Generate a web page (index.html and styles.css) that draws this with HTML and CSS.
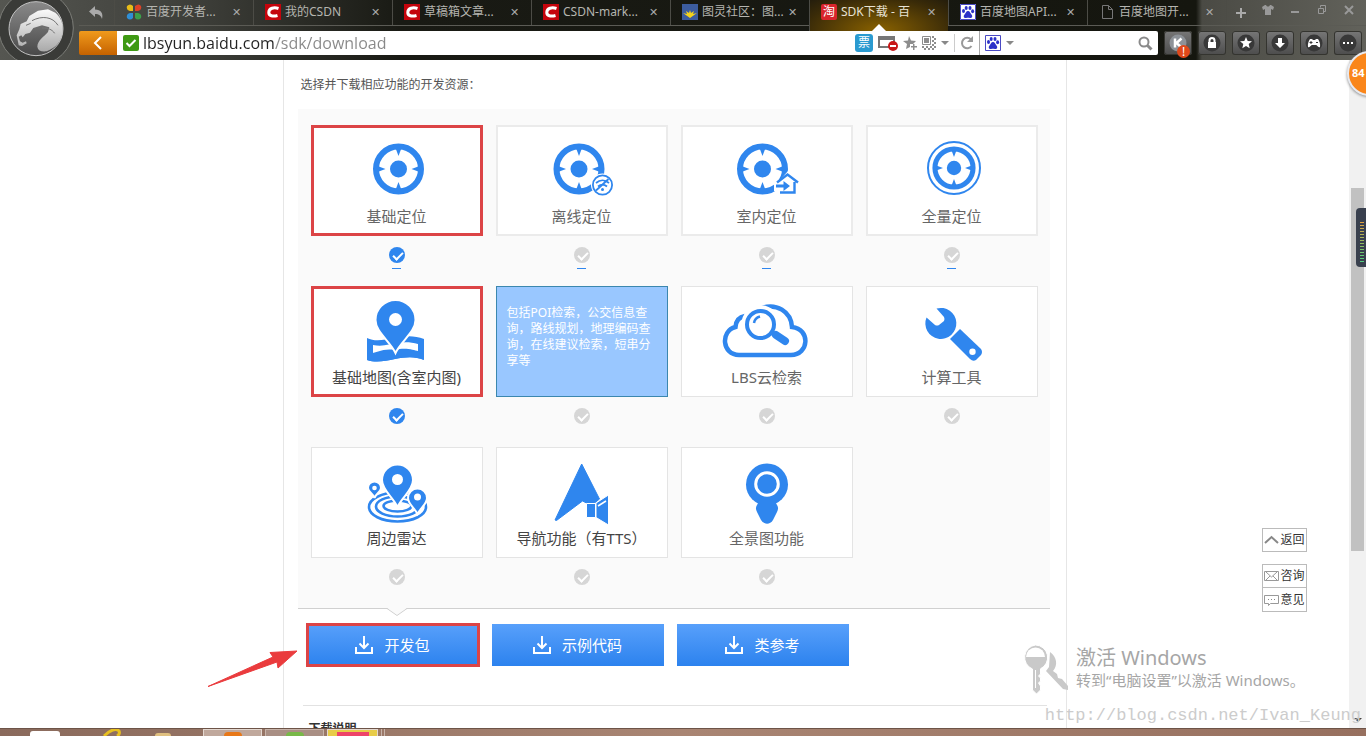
FILE: index.html
```html
<!DOCTYPE html>
<html lang="zh-CN">
<head>
<meta charset="utf-8">
<title>SDK下载 - 百度</title>
<link rel="stylesheet" href="styles.css">
</head>
<body>
<svg width="0" height="0" class="defs" aria-hidden="true">
  <defs>
    <linearGradient id="silver" x1="0" y1="0" x2="0" y2="1"><stop offset="0" stop-color="#fafafa"/><stop offset="1" stop-color="#a9a9a9"/></linearGradient>
    <linearGradient id="disc" x1="0" y1="0" x2="0" y2="1"><stop offset="0" stop-color="#8a8a8a"/><stop offset="0.5" stop-color="#6a6a6a"/><stop offset="1" stop-color="#484848"/></linearGradient>
    <symbol id="target" viewBox="-26 -26 52 52">
      <circle r="22.5" fill="#fff" stroke="#2f86ee" stroke-width="6"/>
      <circle r="8.5" fill="#2f86ee"/>
      <path fill="#2f86ee" d="M-3-21h6L0-13zM-3 21h6L0 13zM-21-3v6l8-3zM21-3v6l-8-3z"/>
    </symbol>
    <symbol id="paw" viewBox="0 0 16 16">
      <path fill="#fff" d="M0 0h16v16H0z"/>
      <path fill="none" stroke="#4a4ac4" d="M.5.5h15v15H.5z"/>
      <g fill="#2c32c8"><ellipse cx="3.500" cy="7" rx="1.500" ry="2"/><ellipse cx="6.200" cy="4" rx="1.500" ry="2.100"/><ellipse cx="10" cy="4" rx="1.500" ry="2.100"/><ellipse cx="12.600" cy="7.300" rx="1.500" ry="2"/><path d="M8 7c2 0 2 2 3.500 3.400 1.600 1.800.3 4-1.600 3.600-1.500-.3-2.300-.3-3.800 0-2 .4-3.200-1.800-1.600-3.600C6 9 6 7 8 7z"/></g>
    </symbol>
    <symbol id="csdn" viewBox="0 0 16 16">
      <path fill="#c4040c" d="M0 0h16v16H0z"/>
      <path fill="none" stroke="#fff" stroke-width="3" d="M13.500 4.500C9 3 4 4 3.800 8.300 3.600 12 8 12.800 12.500 11.500"/>
    </symbol>
    <symbol id="download" viewBox="0 0 18 18">
      <path fill="none" stroke="#fff" stroke-width="2" d="M9 0v12M4.500 7.500 9 12l4.500-4.500M1 11v6h16v-6"/>
    </symbol>
  </defs>
</svg>

<header class="browser">
  <svg class="logo" viewBox="0 0 237 180" aria-hidden="true">
    <circle cx="108" cy="84" r="112" fill="#3a3b38" stroke="#7c7d78" stroke-width="3"/>
    <circle cx="108" cy="86" r="81" fill="url(#disc)" stroke="#c2c2c2" stroke-width="3"/>
    <path fill="url(#silver)" d="M50 106l8-18 4-16 18-8 8-16 26-16 30-4 22 10c16 14 24 32 22 56-2 28-20 50-48 60-16 2-26-2-28-14 0-18 20-30 32-44l4-14-22-6-26 8-10 14-14 4-8 10-4-6-8 4 4 14 8 4 10-4 2 6-14 8-10-2z"/>
    <path fill="none" stroke="#747474" stroke-width="3" d="M96 62c30-16 62-12 78 14M126 84c18 0 30 4 38 16M78 76l14-6"/>
  </svg>
  <div class="chrome">
    <div class="tabrow">
      <button class="undo" aria-label="后退"><svg width="16" height="14" viewBox="0 0 16 14"><path fill="#aaa" d="M7 0v3.500c6 0 8.500 4 7 9.500-1-3.500-3-5-7-5V11L1 5.500z"/></svg></button>
      <nav class="tabs">
        <div class="tab"><svg class="fav" viewBox="0 0 16 16"><path fill="#e8bc18" d="M1 2q3-3 6 0v5H4Q0 6 1 2z"/><path fill="#dd4227" d="M9 2q4-3 6 0 1 4-3 5H9z"/><path fill="#2f8fd6" d="M1 14q-1-4 3-5h3v5q-3 3-6 0z"/><path fill="#3ba04a" d="M9 9h3q4 1 3 5-3 3-6 0z"/></svg><a href="#">百度开发者...</a><button aria-label="关闭">✕</button></div>
        <div class="tab"><svg class="fav"><use href="#csdn"/></svg><a href="#">我的CSDN</a><button aria-label="关闭">✕</button></div>
        <div class="tab"><svg class="fav"><use href="#csdn"/></svg><a href="#">草稿箱文章...</a><button aria-label="关闭">✕</button></div>
        <div class="tab"><svg class="fav"><use href="#csdn"/></svg><a href="#">CSDN-mark...</a><button aria-label="关闭">✕</button></div>
        <div class="tab"><svg class="fav" viewBox="0 0 16 16"><path fill="#3c5c9e" d="M0 0h16v16H0z"/><path fill="#f2d21c" d="M8 14 1 9l4 1-1-3 3 2 1-3 1 3 3-2-1 3 4-1z"/></svg><a href="#">图灵社区：图...</a><button aria-label="关闭">✕</button></div>
        <div class="tab active"><span class="fav tao">淘</span><a href="#">SDK下载 - 百</a><button aria-label="关闭">✕</button></div>
        <div class="tab"><svg class="fav"><use href="#paw"/></svg><a href="#">百度地图API...</a><button aria-label="关闭">✕</button></div>
        <div class="tab"><svg class="fav" viewBox="0 0 16 16"><path fill="none" stroke="#777" d="M3.500 1.500h6l4 4v9h-10zM9.500 1.500v4h4"/></svg><a href="#">百度地图开...</a><button aria-label="关闭">✕</button></div>
      </nav>
      <div class="window">
        <button aria-label="新标签"><svg width="12" height="18" viewBox="0 0 12 18"><path stroke="#aaa" stroke-width="2" d="M6 7v10M1 12h10"/></svg></button>
        <button aria-label="皮肤"><svg width="12" height="10" viewBox="0 0 12 10"><path fill="#999" d="M0 2 3 0h1c1 2 3 2 4 0h1l3 2-1 3-2-1v6H3V4L1 5z"/></svg></button>
        <button aria-label="最小化"><svg width="10" height="10" viewBox="0 0 10 10"><path fill="#999" d="M1 6h8v2H1z"/></svg></button>
        <button aria-label="还原"><svg width="10" height="10" viewBox="0 0 10 10"><path fill="none" stroke="#999" d="M3.500 2.500v-2h5v6h-2M1.500 3.500h5v5h-5z"/></svg></button>
        <button aria-label="关闭窗口"><svg width="10" height="10" viewBox="0 0 10 10"><path stroke="#999" stroke-width="2" d="m1 1 8 8M9 1 1 9"/></svg></button>
      </div>
    </div>
    <div class="toolbar">
      <button class="back" aria-label="返回"><svg width="10" height="14" viewBox="0 0 10 14"><path fill="none" stroke="#fff" stroke-width="2" d="M8 1 2 7l6 6"/></svg></button>
      <div class="address">
        <svg width="16" height="16" viewBox="0 0 16 16"><rect width="16" height="16" rx="2" fill="#3f9a14"/><path fill="none" stroke="#fff" stroke-width="2" d="m3.500 8 3 3 6-6"/></svg>
        <input class="url" type="text" aria-label="地址" value="lbsyun.baidu.com/sdk/download">
        <div class="tools">
          <span class="ticket">票</span>
          <svg width="20" height="16" viewBox="0 0 20 16"><path fill="none" stroke="#777" stroke-width="2" d="M1 2h15v10H1z"/><path fill="#777" d="M0 1h17v4H0z"/><circle cx="15" cy="11" r="5" fill="#c81818"/><path fill="#fff" d="M12 10h6v2h-6z"/></svg>
          <svg width="14" height="14" viewBox="0 0 14 14"><path fill="#8d8d8d" d="m6 0 2 4.500 5 .5-3 3H7v3l-4 2 1-5-4-3 5-.5zM10 8h1.500v2H14v1.500h-2.500V14H10v-2.500H8V10h2z"/></svg>
          <svg width="14" height="14" viewBox="0 0 14 14"><path fill="none" stroke="#8d8d8d" d="M.5.5h8v8h-8z"/><path fill="#8d8d8d" d="M2 2h5v5H2zM10 0h2v2h-2zM12 2h2v2h-2zM10 4h2v2h-2zM12 6h2v2h-2zM10 8h2v2h-2zM0 10h2v2H0zM2 12h2v2H2zM4 10h2v2H4zM6 12h2v2H6zM8 10h2v2H8zM12 10h2v2h-2zM10 12h2v2h-2z"/></svg>
          <i class="caret"></i><i class="rule"></i>
          <svg width="14" height="14" viewBox="0 0 14 14"><path fill="none" stroke="#999" stroke-width="2" d="M11.500 10A5.200 5.200 0 1 1 11 3.500"/><path fill="#999" d="M13 0v6H7z"/></svg>
          <i class="rule tall"></i>
          <svg width="16" height="16"><use href="#paw"/></svg>
          <i class="caret"></i>
        </div>
        <button class="search" aria-label="搜索"><svg width="15" height="15" viewBox="0 0 15 15"><circle cx="6" cy="6" r="4.500" fill="none" stroke="#8a8a8a" stroke-width="2"/><path stroke="#8a8a8a" stroke-width="3" d="m9.500 9.500 4 4"/></svg></button>
      </div>
      <div class="plugins">
        <button aria-label="K"><svg viewBox="0 0 18 18"><circle cx="9" cy="9" r="8.500" fill="#8d9298"/><path fill="none" stroke="#fff" stroke-width="2.500" d="M6 4.500v9M12.500 4.500 7.500 9l5 4.500"/></svg><span class="alert">!</span></button>
        <button aria-label="密码"><svg viewBox="0 0 18 18"><circle cx="9" cy="9" r="8.500" fill="#383838"/><path fill="#fff" d="M5 8h8v6H5z"/><path fill="none" stroke="#fff" stroke-width="2" d="M6.500 9V6.500a2.500 2.500 0 0 1 5 0V9"/></svg></button>
        <button aria-label="收藏"><svg viewBox="0 0 18 18"><circle cx="9" cy="9" r="8.500" fill="#383838"/><path fill="#fff" d="m9 3 1.700 4 4.300.3-3.300 2.700 1 4.200L9 12l-3.700 2.200 1-4.200L3 7.300 7.300 7z"/></svg></button>
        <button aria-label="下载"><svg viewBox="0 0 18 18"><circle cx="9" cy="9" r="8.500" fill="#383838"/><path fill="#fff" d="M7 4h4v5h3l-5 5-5-5h3z"/></svg></button>
        <button aria-label="游戏"><svg viewBox="0 0 18 18"><circle cx="9" cy="9" r="8.500" fill="#383838"/><path fill="#fff" d="M5 5h2l1 1h2l1-1h2c1.500 2 2.500 5 2 8-2 1-3-2-4-2H7c-1 0-2 3-4 2-.5-3 .5-6 2-8z"/><path stroke="#383838" d="M4.500 8.500h3M6 7v3M11 8.500h2"/></svg></button>
        <button aria-label="更多"><svg viewBox="0 0 18 18"><circle cx="9" cy="9" r="8.500" fill="#383838"/><path fill="#fff" d="M4 8h2v2H4zM8 8h2v2H8zM12 8h2v2h-2z"/></svg></button>
      </div>
    </div>
  </div>
</header>

<div class="viewport">
  <main class="column">
    <p class="intro">选择并下载相应功能的开发资源：</p>
    <section class="panel">
      <div class="cell first">
        <label class="card picked" for="f1"><svg viewBox="0 0 100 80"><use href="#target" x="25.500" y="18" width="52" height="52"/></svg><span>基础定位</span></label>
        <input type="checkbox" id="f1" checked>
      </div>
      <div class="cell first">
        <label class="card" for="f2"><svg viewBox="0 0 100 80"><use href="#target" x="21" y="18" width="52" height="52"/><circle cx="70.500" cy="60" r="11.500" fill="#fff"/><g fill="none" stroke="#2f86ee" stroke-width="1.800"><circle cx="70.500" cy="60" r="9.600"/><path d="M64 58c4-3.500 9-3.500 13 0M66 61.500c3-2.500 6-2.500 9 0M64 65.500 76.500 54"/></g><circle cx="70.500" cy="64.500" r="1.500" fill="#2f86ee"/></svg><span>离线定位</span></label>
        <input type="checkbox" id="f2">
      </div>
      <div class="cell first">
        <label class="card" for="f3"><svg viewBox="0 0 100 80"><use href="#target" x="19.500" y="18" width="52" height="52"/><path fill="#fff" d="M57 56h5l9-10 13 12v13H60v-5h-3z"/><path fill="none" stroke="#2f86ee" stroke-width="2.400" d="m60 57.500 10.500-8 10.500 8M63 67.500h14.500V57"/><path fill="#2f86ee" d="M59 59.500h7.500V56l6.500 5-6.500 5v-3.500H59z"/></svg><span>室内定位</span></label>
        <input type="checkbox" id="f3">
      </div>
      <div class="cell first">
        <label class="card" for="f4"><svg viewBox="0 0 100 80"><circle cx="52" cy="43" r="26" fill="none" stroke="#2f86ee" stroke-width="2"/><use href="#target" x="30" y="21" width="44" height="44"/></svg><span>全量定位</span></label>
        <input type="checkbox" id="f4">
      </div>

      <div class="cell">
        <label class="card picked" for="f5"><svg viewBox="0 0 100 80"><path fill="#2f86ee" d="M20 52c8 4 17 2 27 0 10-2 20-3 30 1v21c-9-4-19-3-29-1-10 2-19 4-28 1z"/><path fill="#fff" d="M26 59c10 2 17-1 24-2s14-1 21 1v8c-7-2-14-2-21-1-9 1-15 3-24 2z"/><path fill="#2f86ee" d="M20 68c10-1 16-6 28-4 10-3 19 0 23 1l6 9c-9-4-19-3-29-1-10 2-19 4-28 1z"/><path fill="#2f86ee" stroke="#fff" stroke-width="2" d="M48.500 67C43 55 28.500 46 28.500 34a20 20 0 0 1 40 0c0 12-14.500 21-20 33z"/><circle cx="48.500" cy="33.500" r="6.500" fill="#fff"/></svg><span class="dark">基础地图(含室内图)</span></label>
        <input type="checkbox" id="f5" checked>
      </div>
      <div class="cell">
        <label class="card info" for="f6">包括POI检索，公交信息查询，路线规划，地理编码查询，在线建议检索，短串分享等</label>
        <input type="checkbox" id="f6">
      </div>
      <div class="cell">
        <label class="card" for="f7"><svg viewBox="0 0 100 80"><g fill="none" stroke="#2f86ee" stroke-width="4.500"><path d="M28 30c-6 1-9 5-9.500 11C3 45 5 69 22 69h52c18 0 20-26 1-28-1-16-16-24-30-19"/><circle cx="43.500" cy="38.500" r="17" fill="#fff" stroke="#fff"/><circle cx="43.500" cy="38.500" r="13.500" fill="#fff" stroke-width="4"/></g><path fill="none" stroke="#2f86ee" stroke-width="2.500" d="M37 37c.5-3.500 2.500-5.500 6-6.500"/><path stroke="#2f86ee" stroke-width="8" stroke-linecap="round" d="m59 49 9 6"/><path stroke="#2f86ee" stroke-width="5" d="m54 46 6 4"/></svg><span>LBS云检索</span></label>
        <input type="checkbox" id="f7">
      </div>
      <div class="cell">
        <label class="card" for="f8"><svg viewBox="0 0 100 80"><path fill="#2f86ee" d="M34.500 22.500a15.500 15.500 0 1 1-10 9L33 39q2 1 4 0l5-4q1-2 0-4z"/><path fill="#2f86ee" d="M58 43 79 63q2 3 0 6l-5 5q-3 2-6-1L48 53z"/><circle cx="70.500" cy="65.700" r="3.200" fill="#fff"/></svg><span>计算工具</span></label>
        <input type="checkbox" id="f8">
      </div>

      <div class="cell">
        <label class="card" for="f9"><svg viewBox="0 0 100 80"><g fill="none" stroke="#2f86ee" stroke-width="2.600"><ellipse cx="50.500" cy="60" rx="28.500" ry="14.500"/><ellipse cx="50.500" cy="59.500" rx="21.500" ry="10"/><ellipse cx="50.500" cy="59" rx="14" ry="5.500"/></g><g fill="#2f86ee" stroke="#fff" stroke-width="2"><path d="M50.500 60C46 50 35 43 35 33a15.500 15.500 0 0 1 31 0c0 10-11 17-15.500 27z"/><path d="M70.500 67c-3-6-9.500-10-9.500-16a9.500 9.500 0 0 1 19 0c0 6-6.500 10-9.500 16z"/><path d="M27.500 51c-1-4-6.500-6-6.500-10a6.500 6.500 0 0 1 13 0c0 4-5.500 6-6.500 10z"/></g><g fill="#fff"><circle cx="50.500" cy="32.500" r="5.500"/><circle cx="70.500" cy="50" r="3.500"/><circle cx="27.500" cy="41" r="2.300"/></g></svg><span class="dark">周边雷达</span></label>
        <input type="checkbox" id="f9">
      </div>
      <div class="cell">
        <label class="card" for="f10"><svg viewBox="0 0 100 80"><path fill="#2f86ee" stroke="#2f86ee" stroke-linejoin="round" d="M49.700 17 23 73l1.500.5L50.500 54l4 2h8l5-4z"/><path fill="#2f86ee" stroke="#fff" d="M54.500 56.500h9v14h-9zM64 56l12.500-8v30L64 70.500z"/><path stroke="#fff" stroke-width="1.500" d="m66 59 8-5"/></svg><span class="dark">导航功能（有TTS）</span></label>
        <input type="checkbox" id="f10">
      </div>
      <div class="cell">
        <label class="card" for="f11"><svg viewBox="0 0 100 80"><circle cx="50" cy="37.500" r="21" fill="#2f86ee"/><circle cx="50" cy="37" r="11.300" fill="none" stroke="#fff" stroke-width="3"/><path fill="#2f86ee" d="M42 55h16c3 4 4 6 2 10l-4 8c-3 5-9 5-12 0l-4-8c-2-4-1-6 2-10z"/></svg><span>全景图功能</span></label>
        <input type="checkbox" id="f11">
      </div>
      <svg class="notch" width="22" height="8" viewBox="0 0 22 8"><path fill="#fafafa" d="M1 0h20L11 7z"/><path fill="none" stroke="#d0d0d0" d="m1 .5 10 7 10-7"/></svg>
    </section>
    <div class="downloads">
      <button class="picked"><svg width="18" height="18"><use href="#download"/></svg>开发包</button>
      <button><svg width="18" height="18"><use href="#download"/></svg>示例代码</button>
      <button><svg width="18" height="18"><use href="#download"/></svg>类参考</button>
    </div>
    <h2 class="notes">下载说明</h2>
    <svg class="pointer" width="92" height="38" viewBox="0 0 92 38"><path fill="#ea3b3d" stroke="#ea3b3d" stroke-linejoin="round" d="M1 36.500 66 7l-3-4.500L90 1 71 18l-1-6z"/></svg>
  </main>
  <div class="scrollbar"><div class="thumb"></div><i class="down"></i></div>

  <aside class="side">
    <a href="#" class="top"><svg width="15" height="16" viewBox="0 0 15 16"><path fill="none" stroke="#888" stroke-width="2" d="m1 11 6.500-6 6.500 6"/></svg>返回</a>
    <a href="#"><svg width="15" height="16" viewBox="0 0 15 16"><path fill="none" stroke="#999" d="M.5 3.500h14v9H.5zM2 4l5.500 5L13 4M2 12l4-4M13 12 9 8"/></svg>咨询</a>
    <a href="#"><svg width="15" height="16" viewBox="0 0 15 16"><path fill="none" stroke="#999" d="M.5 3.500h14v8h-8l-2 2v-2h-4z"/><path fill="#888" d="M4 7h1v1H4zM7 7h1v1H7zM10 7h1v1h-1z"/></svg>意见</a>
  </aside>
  <div class="activate">
    <svg width="46" height="50" viewBox="0 0 46 50"><path fill="#c9c9c9" d="M27 7c7 5 8 13 3 19l4 3 1 4 4 1 6 7v4l-5-1-17-18 3-4z"/><path fill="#c9c9c9" stroke="#fff" d="M12.500 0a12.500 12.500 0 0 1 5 23.800V29l-2 2 2 2v3l-2 2 2 3v4l-4 4-4-4V24A12.500 12.500 0 0 1 12.500 0z"/><path fill="#fff" d="M3 12a9.500 9.500 0 0 1 19 0z"/><path stroke="#fff" d="M12.500 25v18"/></svg>
    <div><strong>激活 Windows</strong><p>转到“电脑设置”以激活 Windows。</p></div>
  </div>
  <div class="mark">http://blog.csdn.net/Ivan_Keung</div>
  <div class="gauge"><i></i></div>
</div>
<div class="ball">84</div>

<footer class="taskbar">
  <i class="app white"></i>
  <svg class="app" width="20" height="8" viewBox="0 0 20 8"><path fill="none" stroke="#e8c020" stroke-width="3" d="M2 8C8 2 14 0 17 3c1 2 0 4-2 5"/></svg>
  <i class="app folder"></i>
  <i class="task"><b class="orange"></b></i>
  <i class="task dim"><b class="green"></b></i>
  <i class="task yellow"><b class="red"></b></i>
  <i class="edge"></i>
</footer>
</body>
</html>
```

FILE: styles.css
```css
* { box-sizing: border-box; }
body {
  margin: 0;
  height: 100vh;
  display: flex;
  flex-direction: column;
  overflow: hidden;
  position: relative;
  background: #fff;
  color: #555;
  font: 12px/16px "Noto Sans", "Noto Sans CJK SC", sans-serif;
}
button { border: 0; padding: 0; background: none; color: inherit; font: inherit; }
a { color: inherit; text-decoration: none; }
p { margin: 0; }
svg { display: block; flex: none; }
.defs { position: absolute; }

/* browser frame */
.browser {
  display: flex;
  height: 60px;
  flex: none;
  background: linear-gradient(90deg, #555651 0, #3d3e39 200px, #191a14 400px, #15160f calc(100% - 170px), #4a4a44 calc(100% - 164px), #62625b 100%);
}
.logo { width: 79px; height: 60px; }
.chrome { flex: 1; min-width: 0; }
.tabrow { display: flex; height: 26px; border-bottom: 1px solid #5b5b55; }
.undo { width: 35px; display: flex; align-items: center; padding-left: 9px; }
.tabs { flex: 1; display: flex; min-width: 0; }
.tab {
  flex: 1 1 0;
  min-width: 0;
  display: flex;
  align-items: center;
  border-left: 1px solid #4c4c46;
  padding: 0 12px 2px 11px;
  color: #b5b5b0;
  position: relative;
}
.tab a { flex: 1; margin-left: 4px; white-space: nowrap; overflow: hidden; }
.tab button { width: 10px; font-size: 11px; color: #aaa; }
.fav { width: 16px; height: 16px; flex: none; }
.tao { background: #d8252c; color: #fff; border-radius: 2px; text-align: center; }
.active { background: radial-gradient(ellipse at 50% 100%, #8a6200, #3a2b08 75%, #241d0c); color: #e8e2d4; height: 31px; padding-bottom: 7px; }
.active::after {
  content: "";
  position: absolute;
  left: 50%;
  bottom: 0;
  margin-left: -7px;
  border: 7px solid transparent;
  border-top: 0;
  border-bottom-color: #fff;
}
.window { width: 140px; display: flex; border-left: 1px solid #4c4c46; }
.window button { width: 27px; height: 20px; display: flex; justify-content: center; align-items: center; }
.toolbar { display: flex; height: 24px; margin-top: 5px; padding-right: 4px; }
.back { width: 38px; display: flex; justify-content: center; align-items: center; background: linear-gradient(#f09a1c, #c56200); border-radius: 2px 0 0 2px; }
.address { flex: 1; min-width: 0; display: flex; align-items: center; background: #fff; padding: 0 5px 0 6px; border-radius: 0 2px 2px 0; }
.url {
  flex: 1;
  min-width: 0;
  height: 24px;
  border: 0;
  padding: 0;
  margin-left: 4px;
  font: 16px/24px "Open Sans", "Noto Sans", sans-serif;
  background: linear-gradient(90deg, #222 132px, #888 132px);
  background-clip: text;
  -webkit-text-fill-color: transparent;
}
.tools { display: flex; align-items: center; gap: 5px; }
.ticket { width: 18px; height: 18px; border-radius: 3px; background: #2a9ad0; color: #fff; text-align: center; line-height: 18px; }
.caret { border: 4px solid transparent; border-top-color: #888; border-bottom: 0; }
.rule { width: 1px; height: 18px; background: #ccc; }
.tall { height: 24px; background: #aaa; }
.search { margin-left: 124px; }
.plugins { display: flex; gap: 6px; margin-left: 6px; }
.plugins button { width: 28px; display: flex; justify-content: center; align-items: center; border-radius: 3px; background: linear-gradient(#777, #4c4c4c); box-shadow: inset 0 0 0 1px #34342f; position: relative; }
.plugins svg { width: 18px; height: 18px; }
.alert { position: absolute; right: 2px; bottom: -3px; width: 13px; height: 13px; line-height: 13px; border-radius: 50%; background: #e0481a; color: #fff; }

/* page */
.viewport { flex: 1; min-height: 0; display: flex; position: relative; overflow: hidden; }
.column {
  width: 784px;
  max-width: 100%;
  margin: 0 auto;
  padding: 0 16px 0 14px;
  border: solid #e6e6e6;
  border-width: 0 1px;
  position: relative;
}
.intro { line-height: 49px; padding-left: 3px; }
.panel {
  display: grid;
  grid-template-columns: repeat(4, 1fr);
  grid-auto-rows: 161px;
  column-gap: 13px;
  padding: 16px 12px 0 13px;
  background: #fafafa;
  border-bottom: 1px solid #d0d0d0;
  position: relative;
}
.cell { display: flex; flex-direction: column; align-items: center; gap: 11px; }
.card {
  width: 100%;
  height: 111px;
  display: flex;
  flex-direction: column;
  align-items: center;
  background: #fff;
  box-shadow: inset 0 0 0 1px #e4e4e4;
  color: #666;
  font-size: 15px;
  line-height: 22px;
}
.first .card { box-shadow: inset 0 0 0 2px #ebebeb; }
.card svg { width: 100px; height: 80px; }
.card .dark { color: #444; }
.cell .picked { box-shadow: inset 0 0 0 3px #dc4446; }
.cell .info {
  display: block;
  padding: 19px 16px 0 11px;
  background: #99c7ff;
  box-shadow: inset 0 0 0 1px #3b87ae;
  color: #fff;
  font-size: 12px;
  line-height: 16px;
}
.cell input { appearance: none; width: 16px; height: 16px; margin: 0; border-radius: 50%; background: #d6d6d6; position: relative; }
.cell input:checked { background: #2f86ee; }
.cell input::before {
  content: "";
  position: absolute;
  left: 4px;
  top: 5px;
  width: 8px;
  height: 4px;
  border: solid #fff;
  border-width: 0 0 2px 2px;
  transform: rotate(-45deg);
}
.first input::after { content: ""; position: absolute; left: 3px; top: 21px; width: 9px; height: 1px; background: #2f86ee; }
.notch { position: absolute; left: 88px; top: 100%; }
.downloads { display: flex; gap: 13px; padding: 15px 8px 0 9px; }
.downloads button {
  width: 172px;
  height: 42px;
  display: flex;
  justify-content: center;
  align-items: center;
  gap: 11px;
  color: #fff;
  font-size: 15px;
  background: linear-gradient(#58a0fb, #2c82ee);
}
.downloads .picked { box-shadow: inset 0 0 0 2px #dc4446, 0 0 0 1px #dc4446; }
.notes { margin: 39px 3px 0 5px; padding: 15px 0 0 6px; border-top: 1px solid #e2e2e2; font-size: 12px; color: #333; line-height: 16px; }
.pointer { position: absolute; left: -77px; top: 590px; }

.scrollbar { width: 17px; background: #f1f1f1; display: flex; flex-direction: column; align-items: center; justify-content: space-between; padding: 128px 0 6px; }
.thumb { width: 13px; height: 363px; background: #c1c1c1; }
.down { border: 4px solid transparent; border-top-color: #444; border-bottom: 0; }
.side { position: absolute; right: 59px; top: 468px; width: 45px; color: #333; }
.side a { display: flex; align-items: center; justify-content: center; gap: 1px; height: 24px; border: 1px solid #bbb; }
.side .top { margin-bottom: 12px; }
.side a:last-child { border-top: 0; }
.activate { position: absolute; right: 58px; top: 585px; width: 285px; display: flex; gap: 7px; color: #a6a6a6; white-space: nowrap; }
.activate strong { display: block; font-weight: 400; font-size: 20px; line-height: 26px; }
.activate p { font-size: 15px; line-height: 18px; }
.mark { position: absolute; right: 5px; bottom: 0; font: 17px/24px "Liberation Mono", monospace; color: #ccc; }
.gauge { position: absolute; right: 0; top: 148px; width: 10px; height: 59px; border-radius: 4px 0 0 4px; background: #39404e; padding: 14px 2px 5px 4px; }
.gauge i { display: block; height: 100%; background: repeating-linear-gradient(transparent 0 1px, #39404e 1px 3px), linear-gradient(#e0a040, #50d080); }
.ball { position: absolute; right: -26px; top: 51px; width: 45px; height: 45px; padding-left: 3px; border-radius: 50%; border: 2px solid #e8eaf0; background: #fa861a; box-shadow: 0 1px 3px #888; color: #fff; font-size: 11px; font-weight: 700; line-height: 39px; }

.taskbar { height: 8px; flex: none; display: flex; align-items: flex-end; padding-left: 30px; background: linear-gradient(90deg, #8a6a5c, #a98573 50%, #97705f); border-top: 1px solid #6d5448; overflow: hidden; }
.white { width: 30px; height: 5px; border-radius: 3px 3px 0 0; background: #fff; margin-right: 42px; }
.folder { width: 16px; height: 3px; background: #e0c080; margin: 0 32px 0 33px; border-radius: 3px 3px 0 0; }
.task { width: 59px; height: 7px; margin-right: 3px; border: 1px solid #e4d8d0; border-bottom: 0; background: #c0a89c; display: flex; justify-content: center; align-items: flex-end; }
.dim { background: #a98f84; border-color: #c8b4aa; }
.yellow { width: 51px; background: #e8cc48; }
.task b { width: 18px; height: 4px; border-radius: 9px 9px 0 0; }
.orange { background: #e87818; }
.green { background: #78b848; }
.task .red { width: 32px; border-radius: 0; background: #ee4468; }
.edge { width: 4px; height: 8px; border: solid #c8b4aa; border-width: 0 1px; }
```
